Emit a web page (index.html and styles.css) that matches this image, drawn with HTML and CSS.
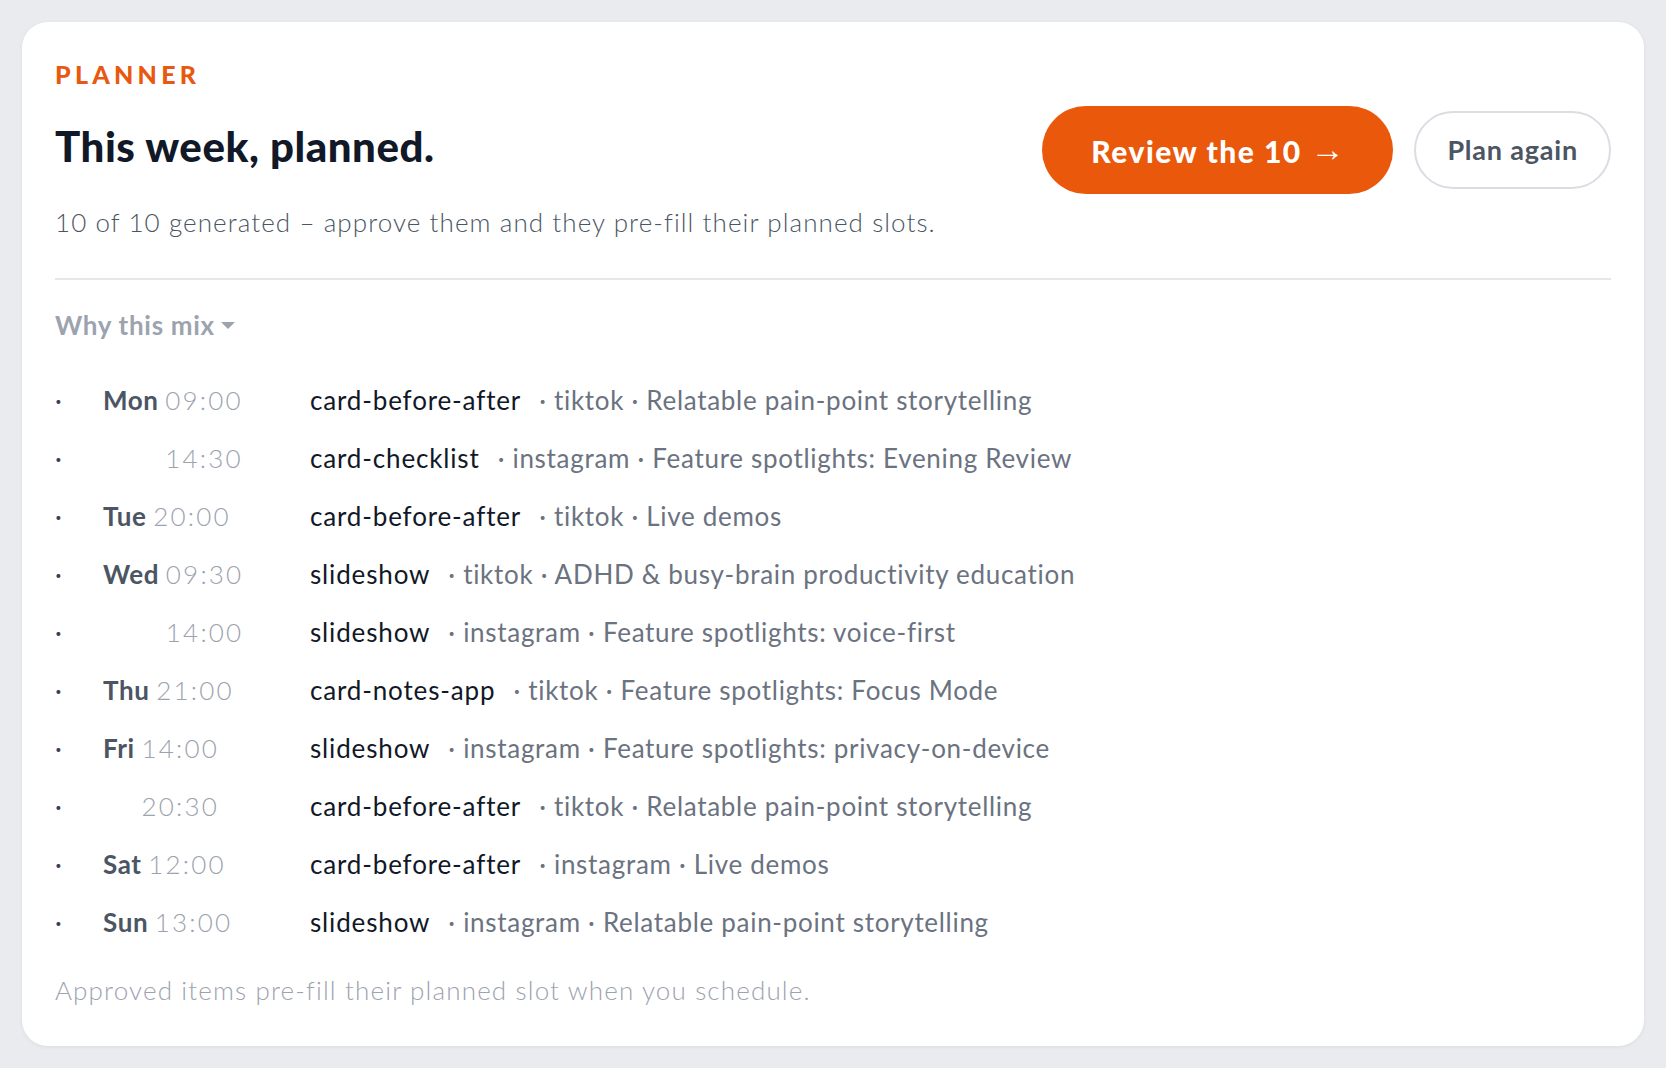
FILE: index.html
```html
<!DOCTYPE html>
<html lang="en">
<head>
<meta charset="utf-8">
<title>Planner</title>
<link rel="stylesheet" href="styles.css">
</head>
<body>
<main class="card">
  <header class="head">
    <div class="head-text">
      <div class="eyebrow">PLANNER</div>
      <h1 class="title">This week, planned.</h1>
      <p class="sub">10 of 10 generated – approve them and they pre-fill their planned slots.</p>
    </div>
    <div class="actions">
      <button class="btn-primary">Review the 10 <span class="arrow">→</span></button>
      <button class="btn-ghost">Plan again</button>
    </div>
  </header>
  <hr class="rule">
  <div class="why">Why this mix <span class="caret"></span></div>
  <ul class="plan">
    <li class="row"><span class="dot">·</span><span class="when"><b class="day">Mon</b> <span class="time">09:00</span></span><span class="name">card-before-after</span><span class="meta">· tiktok · Relatable pain-point storytelling</span></li>
    <li class="row"><span class="dot">·</span><span class="when"><b class="day hidden">Mon</b> <span class="time">14:30</span></span><span class="name">card-checklist</span><span class="meta">· instagram · Feature spotlights: Evening Review</span></li>
    <li class="row"><span class="dot">·</span><span class="when"><b class="day">Tue</b> <span class="time">20:00</span></span><span class="name">card-before-after</span><span class="meta">· tiktok · Live demos</span></li>
    <li class="row"><span class="dot">·</span><span class="when"><b class="day">Wed</b> <span class="time">09:30</span></span><span class="name">slideshow</span><span class="meta">· tiktok · ADHD &amp; busy-brain productivity education</span></li>
    <li class="row"><span class="dot">·</span><span class="when"><b class="day hidden">Wed</b> <span class="time">14:00</span></span><span class="name">slideshow</span><span class="meta">· instagram · Feature spotlights: voice-first</span></li>
    <li class="row"><span class="dot">·</span><span class="when"><b class="day">Thu</b> <span class="time">21:00</span></span><span class="name">card-notes-app</span><span class="meta">· tiktok · Feature spotlights: Focus Mode</span></li>
    <li class="row"><span class="dot">·</span><span class="when"><b class="day">Fri</b> <span class="time">14:00</span></span><span class="name">slideshow</span><span class="meta">· instagram · Feature spotlights: privacy-on-device</span></li>
    <li class="row"><span class="dot">·</span><span class="when"><b class="day hidden">Fri</b> <span class="time">20:30</span></span><span class="name">card-before-after</span><span class="meta">· tiktok · Relatable pain-point storytelling</span></li>
    <li class="row"><span class="dot">·</span><span class="when"><b class="day">Sat</b> <span class="time">12:00</span></span><span class="name">card-before-after</span><span class="meta">· instagram · Live demos</span></li>
    <li class="row"><span class="dot">·</span><span class="when"><b class="day">Sun</b> <span class="time">13:00</span></span><span class="name">slideshow</span><span class="meta">· instagram · Relatable pain-point storytelling</span></li>
  </ul>
  <p class="foot">Approved items pre-fill their planned slot when you schedule.</p>
</main>
</body>
</html>
```

FILE: styles.css
```css
* { box-sizing: border-box; }
html, body { margin: 0; }
body {
  background: #e9ebef;
  padding: 22px;
  font-family: Lato, "Open Sans", sans-serif;
  color: #111827;
}
.card {
  background: #fff;
  border-radius: 26px;
  padding: 37px 33px 40px;
  box-shadow: 0 1px 4px rgba(17, 24, 39, 0.06);
}
.head {
  display: flex;
  align-items: center;
  justify-content: space-between;
}
.eyebrow {
  font-size: 25px;
  line-height: 30px;
  font-weight: 900;
  letter-spacing: 0.17em;
  color: #e8590f;
}
.title {
  margin: 33px 0 0;
  font-size: 42px;
  line-height: 49px;
  font-weight: 900;
  color: #111827;
  letter-spacing: 0.55px;
}
.sub {
  margin: 36px 0 0;
  font-size: 26px;
  line-height: 31px;
  font-weight: 300;
  letter-spacing: 1.08px;
  color: #4b5563;
}
.actions {
  display: flex;
  align-items: center;
  gap: 21px;
  margin-top: 2px;
}
button { font-family: inherit; cursor: pointer; }
.btn-primary {
  height: 88px;
  padding: 0 49px;
  border: 0;
  border-radius: 44px;
  background: #ea580c;
  color: #fff;
  font-size: 30px;
  font-weight: 900;
  letter-spacing: 1.5px;
}
.arrow {
  font-family: "Liberation Sans", "DejaVu Sans", sans-serif;
  font-weight: 400;
  font-size: 34px;
  letter-spacing: 0;
  vertical-align: 2px;
}
.btn-ghost {
  height: 78px;
  padding: 0 31px;
  border: 2px solid #dadde2;
  border-radius: 39px;
  background: #fff;
  color: #4b5563;
  font-size: 27px;
  font-weight: 700;
  letter-spacing: 0.8px;
}
.rule {
  margin: 40px 0 0;
  border: 0;
  border-top: 2px solid #e5e7eb;
}
.why {
  margin-top: 30px;
  font-size: 26px;
  line-height: 31px;
  font-weight: 700;
  letter-spacing: 0.7px;
  color: #9ca3af;
  display: flex;
  align-items: center;
}
.caret {
  margin-left: 6px;
  width: 0;
  height: 0;
  border-left: 7px solid transparent;
  border-right: 7px solid transparent;
  border-top: 7px solid #9ca3af;
}
.plan {
  list-style: none;
  margin: 30px 0 0;
  padding: 0;
}
.row {
  display: grid;
  grid-template-columns: 48px 207px auto 1fr;
  align-items: baseline;
  font-size: 26px;
  line-height: 58px;
  white-space: nowrap;
}
.dot { color: #374151; }
.day { font-weight: 700; color: #4b5563; letter-spacing: 0.6px; }
.day.hidden { visibility: hidden; }
.time { font-weight: 300; color: #9ca3af; letter-spacing: 2.2px; }
.name { color: #111827; margin-right: 18px; letter-spacing: 0.85px; }
.meta { color: #6b7280; letter-spacing: 0.7px; }
.foot {
  margin: 24px 0 0;
  font-size: 26px;
  line-height: 31px;
  font-weight: 300;
  letter-spacing: 1.15px;
  color: #9ca3af;
}
```
